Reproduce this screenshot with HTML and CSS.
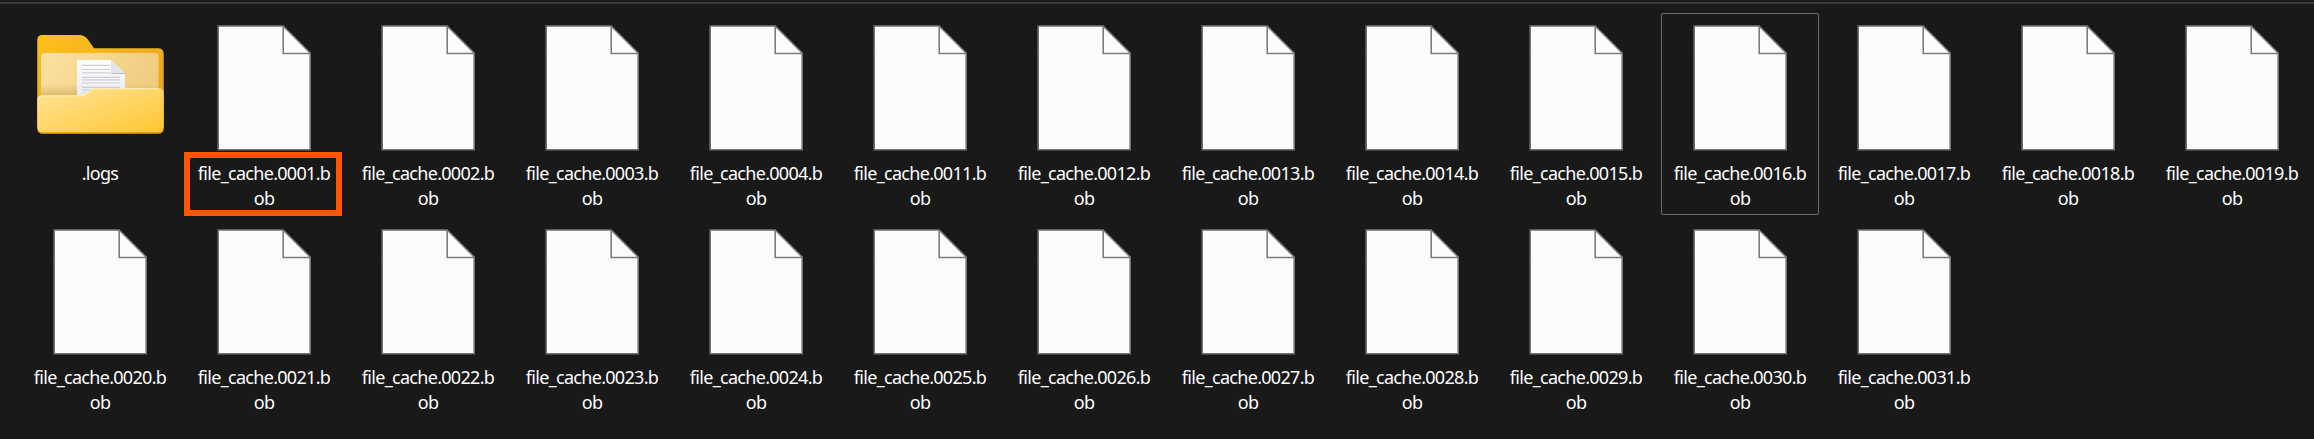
FILE: index.html
```html
<!DOCTYPE html>
<html lang="en">
<head>
<meta charset="utf-8">
<title>Files</title>
<link rel="stylesheet" href="styles.css">
</head>
<body>
<svg class="defs" width="0" height="0" aria-hidden="true">
  <symbol id="doc" viewBox="0 0 94 126">
    <path d="M1.200 1H66.200L93.200 28V124.800H1.200Z" fill="#fbfbfb" stroke="#73736d" stroke-width="1.6"/>
    <path d="M66.200 1V28.500H93.200" fill="none" stroke="#7d7d77" stroke-width="1.6"/>
  </symbol>
</svg>
<main class="files">
  <div class="item">
    <svg class="icon folder" viewBox="0 0 128 100">
      <defs>
        <linearGradient id="back" x1="0" y1="0" x2="1" y2="1"><stop offset="0" stop-color="#ffc01c"/><stop offset="1" stop-color="#e0a022"/></linearGradient>
        <linearGradient id="inner" x1="0" y1="0" x2="1" y2="0.3"><stop offset="0" stop-color="#fce1a0"/><stop offset="1" stop-color="#efcd80"/></linearGradient>
        <linearGradient id="front" x1="0" y1="0" x2="1" y2="1"><stop offset="0" stop-color="#ffe49a"/><stop offset="1" stop-color="#ffc730"/></linearGradient>
        <linearGradient id="paper" x1="0" y1="0" x2="0" y2="1"><stop offset="0" stop-color="#fff"/><stop offset="1" stop-color="#e4e7ec"/></linearGradient>
        <linearGradient id="shade" x1="0" y1="0" x2="0" y2="1"><stop offset="0" stop-color="#a87820" stop-opacity="0"/><stop offset="1" stop-color="#a87820" stop-opacity=".35"/></linearGradient>
      </defs>
      <path d="M1.300 6Q1.300 1 6.300 1H43Q48 1 51.500 5L58 14.300H122Q127.700 14.300 127.700 20V94Q127.700 99.800 122 99.800H7Q1.300 99.800 1.300 94Z" fill="url(#back)"/>
      <rect x="5" y="19" width="117.500" height="60" rx="3.500" fill="url(#inner)"/>
      <path d="M5 50H122.500V62H5Z" fill="url(#shade)"/>
      <path d="M41 26H75L89 39.500V66H41Z" fill="url(#paper)"/>
      <path d="M46 31.300H74M46 35.500H74M46 38.800H74M46 43.300H84M46 45.800H84M46 49H84M46 53.300H84M46 55.800H64M46 59H58" stroke="#cdcfd3" stroke-width="1.200"/>
      <path d="M75 26L89 39.500H75Z" fill="#e4e4e7"/>
      <path d="M75 39.500H89" stroke="#b9babd"/>
      <path d="M1.300 66Q1.300 61.300 6 61.300H43Q48 61.300 51 58.700L54 56Q57 54 61 54H122Q127.700 54 127.700 59V92Q127.700 98 122 98H7Q1.300 98 1.300 92Z" fill="url(#front)"/>
      <path d="M2 65Q2.500 62 6 62H43Q48 62 51 59.500L54 57Q57 54.700 61 54.700H122" fill="none" stroke="#ffebb5" stroke-width="1.200"/>
    </svg>
    <div class="name">.logs</div>
  </div>
  <div class="item marked"><svg class="icon"><use href="#doc"/></svg><div class="name">file_cache.0001.b<br>ob</div></div>
  <div class="item"><svg class="icon"><use href="#doc"/></svg><div class="name">file_cache.0002.b<br>ob</div></div>
  <div class="item"><svg class="icon"><use href="#doc"/></svg><div class="name">file_cache.0003.b<br>ob</div></div>
  <div class="item"><svg class="icon"><use href="#doc"/></svg><div class="name">file_cache.0004.b<br>ob</div></div>
  <div class="item"><svg class="icon"><use href="#doc"/></svg><div class="name">file_cache.0011.b<br>ob</div></div>
  <div class="item"><svg class="icon"><use href="#doc"/></svg><div class="name">file_cache.0012.b<br>ob</div></div>
  <div class="item"><svg class="icon"><use href="#doc"/></svg><div class="name">file_cache.0013.b<br>ob</div></div>
  <div class="item"><svg class="icon"><use href="#doc"/></svg><div class="name">file_cache.0014.b<br>ob</div></div>
  <div class="item"><svg class="icon"><use href="#doc"/></svg><div class="name">file_cache.0015.b<br>ob</div></div>
  <div class="item focused"><svg class="icon"><use href="#doc"/></svg><div class="name">file_cache.0016.b<br>ob</div></div>
  <div class="item"><svg class="icon"><use href="#doc"/></svg><div class="name">file_cache.0017.b<br>ob</div></div>
  <div class="item"><svg class="icon"><use href="#doc"/></svg><div class="name">file_cache.0018.b<br>ob</div></div>
  <div class="item"><svg class="icon"><use href="#doc"/></svg><div class="name">file_cache.0019.b<br>ob</div></div>
  <div class="item"><svg class="icon"><use href="#doc"/></svg><div class="name">file_cache.0020.b<br>ob</div></div>
  <div class="item"><svg class="icon"><use href="#doc"/></svg><div class="name">file_cache.0021.b<br>ob</div></div>
  <div class="item"><svg class="icon"><use href="#doc"/></svg><div class="name">file_cache.0022.b<br>ob</div></div>
  <div class="item"><svg class="icon"><use href="#doc"/></svg><div class="name">file_cache.0023.b<br>ob</div></div>
  <div class="item"><svg class="icon"><use href="#doc"/></svg><div class="name">file_cache.0024.b<br>ob</div></div>
  <div class="item"><svg class="icon"><use href="#doc"/></svg><div class="name">file_cache.0025.b<br>ob</div></div>
  <div class="item"><svg class="icon"><use href="#doc"/></svg><div class="name">file_cache.0026.b<br>ob</div></div>
  <div class="item"><svg class="icon"><use href="#doc"/></svg><div class="name">file_cache.0027.b<br>ob</div></div>
  <div class="item"><svg class="icon"><use href="#doc"/></svg><div class="name">file_cache.0028.b<br>ob</div></div>
  <div class="item"><svg class="icon"><use href="#doc"/></svg><div class="name">file_cache.0029.b<br>ob</div></div>
  <div class="item"><svg class="icon"><use href="#doc"/></svg><div class="name">file_cache.0030.b<br>ob</div></div>
  <div class="item"><svg class="icon"><use href="#doc"/></svg><div class="name">file_cache.0031.b<br>ob</div></div>
</main>
</body>
</html>
```
FILE: styles.css
```css
*, *::after { box-sizing: border-box; }
html { background: #191919; }
body {
  margin: 0;
  height: 439px;
  padding-top: 2px;
  overflow: hidden;
  background: #191919;
  color: #fff;
  font-family: "Noto Sans", "Open Sans", sans-serif;
}
.defs { position: absolute; }
.files {
  display: grid;
  grid-template-columns: repeat(14, 158px);
  grid-auto-rows: 202px;
  column-gap: 6px;
  row-gap: 2px;
  padding: 9px 0 0 21px;
  border-top: 2px solid #3a3a3a;
}
.item {
  position: relative;
  display: flex;
  flex-direction: column;
  align-items: center;
  padding-top: 12px;
}
.focused { box-shadow: inset 0 0 0 1px #6b6b6b; border-radius: 2px; }
.icon { width: 94px; height: 126px; flex: none; }
.folder { width: 128px; height: 100px; margin: 9px 0 17px; }
.name {
  margin-top: 10px;
  font-size: 18px;
  line-height: 25px;
  letter-spacing: -0.7px;
  text-align: center;
  white-space: nowrap;
}
.marked::after {
  content: "";
  position: absolute;
  left: -1px;
  top: 139px;
  width: 158px;
  height: 64px;
  border: 6px solid #ff5500;
}
```
